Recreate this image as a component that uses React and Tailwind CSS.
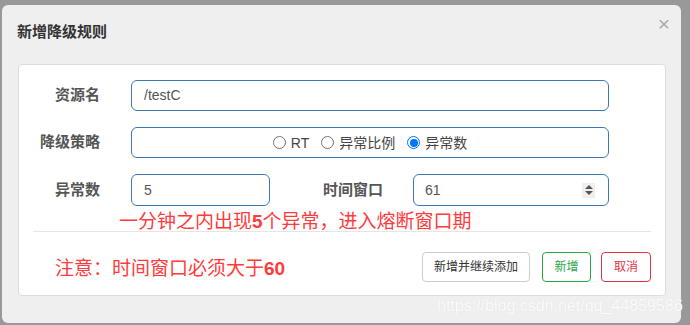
export default function App() {
  const Radio = ({ checked, label }) => (
    <label className="flex items-center">
      {checked ? (
        <span className="flex h-[13px] w-[13px] items-center justify-center rounded-full border border-[#0075ff] bg-white">
          <span className="h-[8px] w-[8px] rounded-full bg-[#0075ff]" />
        </span>
      ) : (
        <span className="h-[13px] w-[13px] rounded-full border border-[#767676] bg-white" />
      )}
      <span className="ml-[5px] text-[14px] leading-[16px] text-[#444]">{label}</span>
    </label>
  );

  return (
    <div className="relative h-[325px] w-[690px] overflow-hidden bg-[#999999] pl-[2px] pt-[5px] font-['Liberation_Sans','Noto_Sans_CJK_SC',sans-serif]">
      <div className="relative h-[318px] w-[679px] rounded-[6px] bg-[#efefef]">
        <div className="h-[59px] px-[15px] pt-[18px]">
          <h4 className="text-[15px] font-bold leading-[18px] text-[#333]">新增降级规则</h4>
        </div>
        <button className="absolute right-[11px] top-[8px] text-[21px] leading-none text-[#aaa]">×</button>

        <div className="ml-[16px] h-[232px] w-[648px] rounded-[4px] border border-[#dddddd] bg-white pt-[15px]">
          <div className="flex h-[31px] items-center">
            <div className="w-[81px] text-right text-[15px] font-bold text-[#555]">资源名</div>
            <div className="ml-[31px] flex h-[31px] w-[478px] items-center rounded-[6px] border border-[#3a78b5] pl-[12px] text-[14px] text-[#555]">
              /testC
            </div>
          </div>

          <div className="mt-[16px] flex h-[31px] items-center">
            <div className="w-[81px] text-right text-[15px] font-bold text-[#555]">降级策略</div>
            <div className="ml-[31px] flex h-[31px] w-[478px] items-center justify-center gap-[12px] rounded-[6px] border border-[#3a78b5]">
              <Radio label="RT" />
              <Radio label="异常比例" />
              <Radio label="异常数" checked />
            </div>
          </div>

          <div className="mt-[16px] flex h-[32px] items-center">
            <div className="w-[81px] text-right text-[15px] font-bold text-[#555]">异常数</div>
            <div className="ml-[31px] flex h-[32px] w-[139px] items-center rounded-[6px] border border-[#3a78b5] pl-[12px] text-[14px] text-[#555]">
              5
            </div>
            <div className="ml-[53px] text-[15px] font-bold text-[#555]">时间窗口</div>
            <div className="ml-[30px] flex h-[32px] w-[196px] items-center rounded-[6px] border border-[#3a78b5] pl-[11px] pr-[13px] text-[14px] text-[#555]">
              <span className="flex-1">61</span>
              <span className="flex h-[15px] w-[13px] flex-col items-center justify-center gap-[2px] bg-[#efefef]">
                <svg width="8" height="4" viewBox="0 0 8 4"><path d="M0 4 L4 0 L8 4 Z" fill="#555" /></svg>
                <svg width="8" height="4" viewBox="0 0 8 4"><path d="M0 0 L4 4 L8 0 Z" fill="#555" /></svg>
              </span>
            </div>
          </div>

          <div className="ml-[100px] mt-[6px] whitespace-nowrap text-[19px] leading-[19px] text-[#ff3b3b]">
            一分钟之内出现<span className="font-bold">5</span>个异常，进入熔断窗口期
          </div>
          <div className="mx-[14px] h-px bg-[#e5e5e5]" />

          <div className="mt-[20px] flex items-center px-[14px]">
            <div className="ml-[22px] pt-[3px] text-[19px] leading-[22px] text-[#ff3b3b]">
              注意：时间窗口必须大于<span className="font-bold">60</span>
            </div>
            <div className="ml-auto flex items-center">
              <button className="h-[30px] w-[108px] rounded-[4px] border border-[#cccccc] bg-white text-[12px] text-[#333]">新增并继续添加</button>
              <button className="ml-[12px] h-[30px] w-[49px] rounded-[4px] border border-[#28a745] bg-white text-[12px] text-[#28a745]">新增</button>
              <button className="ml-[10px] h-[30px] w-[50px] rounded-[4px] border border-[#dc3545] bg-white text-[12px] text-[#dc3545]">取消</button>
            </div>
          </div>
        </div>
      </div>
      <div className="absolute left-[437px] top-[296px] whitespace-nowrap text-[16px] leading-[20px] text-[#fbfbfb] [text-shadow:0_0_1px_#dcdcdc]">
        https://blog.csdn.net/qq_44859586
      </div>
    </div>
  );
}
